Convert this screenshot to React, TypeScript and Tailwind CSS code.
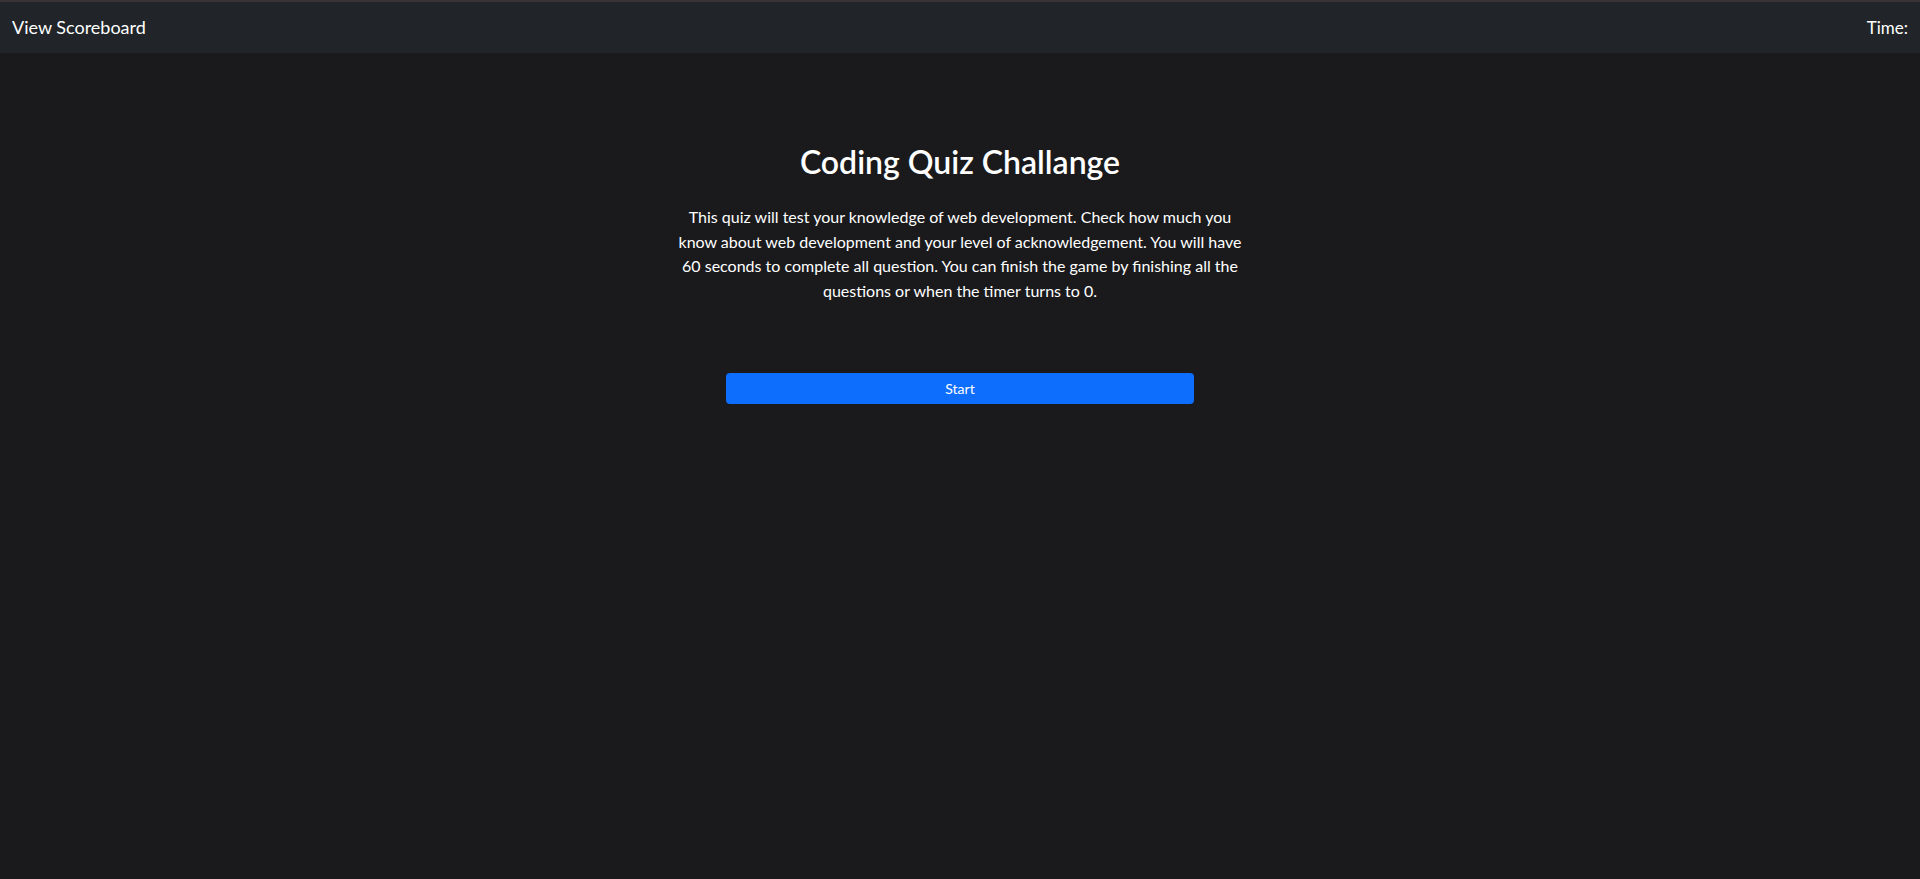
const App = () => {
  return (
    <div className="min-h-screen bg-[#1a1a1c] text-white font-['Lato','Open_Sans',sans-serif]">
      <nav className="flex h-[53px] items-center justify-between border-t-2 border-[#3b3236] bg-[#212529] px-3">
        <a className="text-[18px] text-white">View Scoreboard</a>
        <span className="text-[17px] text-white">Time:</span>
      </nav>
      <main className="mx-auto flex w-[700px] flex-col items-center pt-[90px] text-center">
        <h2 className="text-[32px] font-semibold leading-[1.2]">Coding Quiz Challange</h2>
        <p className="mt-[24px] whitespace-nowrap text-[16px] leading-[24.5px]">
          This quiz will test your knowledge of web development. Check how much you
          <br />
          know about web development and your level of acknowledgement. You will have
          <br />
          60 seconds to complete all question. You can finish the game by finishing all the
          <br />
          questions or when the timer turns to 0.
        </p>
        <button className="mt-[70px] h-[31px] w-[468px] rounded bg-[#0d6efd] text-[14px] text-white">
          Start
        </button>
      </main>
    </div>
  );
};

export default App;
